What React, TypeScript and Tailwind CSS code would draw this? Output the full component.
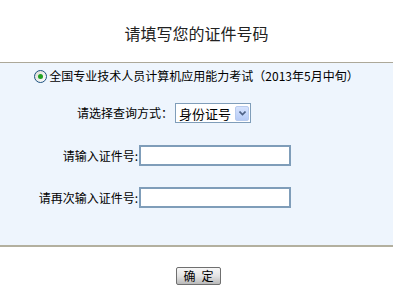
import React from "react";

const font = { fontFamily: '"Noto Sans CJK SC", "Liberation Sans", sans-serif' };

export default function App() {
  return (
    <div className="w-[393px] h-[306px] bg-white text-black text-[12px]" style={font}>
      {/* title */}
      <div className="h-[62px] flex items-center justify-center pt-[4px]">
        <h1 className="text-[16px] leading-[16px] text-[#222]">请填写您的证件号码</h1>
      </div>

      {/* form panel */}
      <div className="h-[185px] bg-[#eef5fd] border-t border-[#aca899] border-b-2 border-b-[#b3b09f] flex flex-col">
        <div className="h-[25px] flex items-center justify-center pt-[1px]">
          <span className="w-[13px] h-[13px] rounded-full border border-[#1c5180] bg-gradient-to-br from-[#dcdcd6] to-white flex items-center justify-center mr-[2px]">
            <span className="w-[5px] h-[5px] rounded-full bg-[#21a121]" />
          </span>
          <span className="leading-[12px]">全国专业技术人员计算机应用能力考试（2013年5月中旬）</span>
        </div>

        <div className="mt-[15px] flex items-center h-[20px]">
          <span className="w-[175px] text-right leading-[12px] pr-[2px]">请选择查询方式：</span>
          <div className="w-[76px] h-[20px] border border-[#7f9db9] bg-white flex items-center justify-between pl-[3px] pr-[1px]">
            <span className="text-[13px] leading-[13px]">身份证号</span>
            <span className="w-[14px] h-[15px] rounded-[2px] border border-[#b8cbee] bg-gradient-to-b from-[#d6e3fd] to-[#b6cbf6] flex items-center justify-center">
              <svg width="7" height="5" viewBox="0 0 7 5">
                <path d="M0.5 0.5 L3.5 3.5 L6.5 0.5" fill="none" stroke="#4d6185" strokeWidth="1.6" />
              </svg>
            </span>
          </div>
        </div>

        <div className="mt-[22px] flex items-center h-[21px]">
          <span className="w-[139px] text-right leading-[12px] pr-[1px]">请输入证件号:</span>
          <div className="w-[152px] h-[21px] border-2 border-[#7f9db9] bg-white" />
        </div>

        <div className="mt-[21px] flex items-center h-[21px]">
          <span className="w-[139px] text-right leading-[12px] pr-[1px]">请再次输入证件号:</span>
          <div className="w-[152px] h-[21px] border-2 border-[#7f9db9] bg-white" />
        </div>
      </div>

      {/* submit */}
      <div className="flex justify-center pt-[20px] pl-[4px]">
        <button className="w-[45px] h-[18px] rounded-[2px] border border-[#6f6f6f] bg-gradient-to-b from-[#f7f7f7] via-[#e4e4e4] to-[#b9b9b9] flex items-center justify-center gap-[6px] text-[12px] leading-[12px]">
          <span>确</span>
          <span>定</span>
        </button>
      </div>
    </div>
  );
}
